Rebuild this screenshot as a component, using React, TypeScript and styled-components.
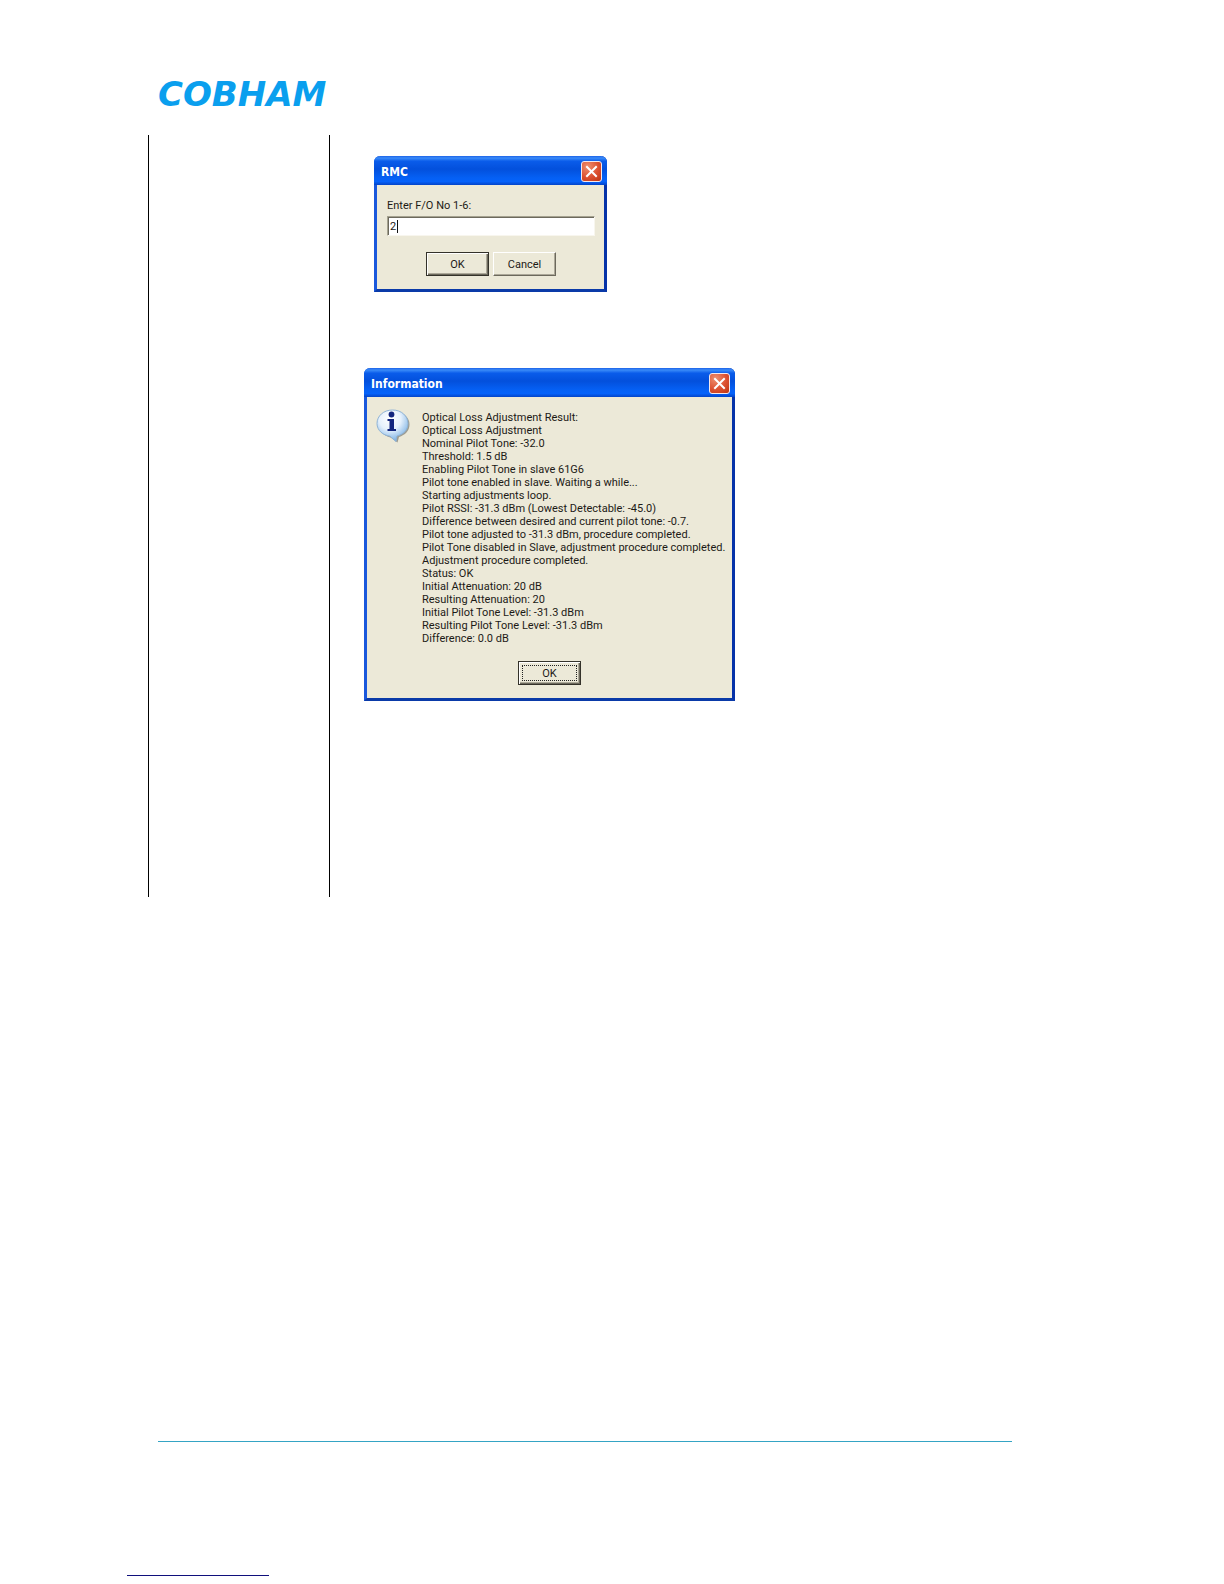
import React, { useState } from "react";
import styled, { createGlobalStyle, css } from "styled-components";

const GlobalStyle = createGlobalStyle`
  *, *::before, *::after { box-sizing: border-box; }
  body { margin: 0; background: #fff; }
`;

const uiFont = css`
  font-family: Roboto, Tahoma, sans-serif;
  font-size: 11px;
  line-height: 13px;
`;

const Page = styled.div`
  min-height: 100vh;
  display: flex;
  flex-direction: column;
  padding: 78px 212px 8px 127px;
  color: #1c1a16;
  ${uiFont}
`;

const Header = styled.header`
  padding-left: 31px;
  margin-bottom: 25px;
`;

const Logo = styled.div`
  font-family: "DejaVu Sans", sans-serif;
  font-weight: 700;
  font-style: italic;
  font-size: 34px;
  line-height: 32px;
  color: #0a9fee;
`;

const Columns = styled.main`
  display: grid;
  grid-template-columns: 181px minmax(0, 1fr);
  min-height: 762px;
  margin-left: 21px;
`;

const SideColumn = styled.aside`
  border-left: 1px solid #000;
`;

const Figures = styled.div`
  display: flex;
  flex-direction: column;
  align-items: flex-start;
  gap: 76px;
  padding: 21px 0 0 34px;
  border-left: 1px solid #000;
`;

const Dialog = styled.section<{ $width: number; $inset?: boolean }>`
  width: ${(p) => p.$width}px;
  margin-left: ${(p) => (p.$inset ? 10 : 0)}px;
  background: #ece9d8;
  border: solid;
  border-width: 0 3px 3px;
  border-color: #0a3cc8 #0632a8 #0a3aa8 #1a58dc;
  border-radius: 6px 6px 0 0;
`;

const TitleBar = styled.header`
  display: flex;
  align-items: center;
  justify-content: space-between;
  height: 29px;
  margin: 0 -3px;
  padding: 2px 5px 0 7px;
  border-radius: 6px 6px 0 0;
  background: linear-gradient(#1c62e8 0, #3a8bf8 7%, #0a5cea 18%, #0350dc 45%, #0560f4 75%, #0562fa 88%, #0344c8 100%);
`;

const Title = styled.h2`
  margin: 0;
  font-family: "DejaVu Sans Condensed", "DejaVu Sans", sans-serif;
  font-size: 12px;
  line-height: 16px;
  font-weight: 700;
  color: #fff;
`;

const CloseButton = styled.button`
  display: grid;
  place-items: center;
  width: 21px;
  height: 21px;
  padding: 0;
  border: 1px solid #f4e8ec;
  border-radius: 3px;
  background: radial-gradient(circle at 30% 25%, #ee9070, #dc5030 55%, #bc3412);
`;

const Form = styled.form`
  padding: 14px 9px 13px 10px;
`;

const Label = styled.label`
  display: block;
  margin-bottom: 4px;
`;

const Field = styled.input`
  display: block;
  width: 100%;
  height: 20px;
  padding: 0 2px;
  border: 1px solid;
  border-color: #a5a290 #f8f6ee #f8f6ee #a5a290;
  box-shadow: inset 1px 1px #6c695c;
  border-radius: 0;
  color: #1c1a16;
  ${uiFont}
  background: linear-gradient(#111, #111) 9px 3px / 1px 13px no-repeat #fff;
  outline: none;
`;

const Actions = styled.div`
  display: flex;
  justify-content: center;
  gap: 4px;
  margin-top: 16px;
`;

const Button = styled.button<{ $primary?: boolean }>`
  position: relative;
  width: 63px;
  height: 24px;
  padding: 0;
  ${uiFont}
  color: #1c1a16;
  background: #ece9d8;
  border: 1px solid;
  border-color: ${(p) => (p.$primary ? "#34322a" : "#fff #6c695c #6c695c #fff")};
  box-shadow: ${(p) =>
    p.$primary
      ? "inset 1px 1px #fff, inset -1px -1px #6c695c, inset -2px -2px #aca899"
      : "inset -1px -1px #aca899"};
`;

const FocusButton = styled(Button)`
  &::after {
    content: "";
    position: absolute;
    inset: 3px;
    border: 1px dotted #222;
  }
`;

const Message = styled.div`
  display: flex;
  gap: 12px;
  padding: 12px 0 0 9px;
`;

const Balloon = styled.svg`
  flex: none;
`;

const Report = styled.div`
  padding-top: 2px;
`;

const Line = styled.p`
  margin: 0;
  white-space: nowrap;
`;

const MessageActions = styled(Actions)`
  padding-bottom: 13px;
`;

const FooterRule = styled.hr`
  width: calc(100% - 31px);
  height: 1px;
  margin: auto 0 0 31px;
  border: 0;
  background: #35a4c4;
`;

const NoteRule = styled.hr`
  width: 142px;
  height: 1px;
  margin: 133px 0 0;
  border: 0;
  background: #10107c;
`;

const CloseIcon = () => (
  <svg width="13" height="13" viewBox="0 0 13 13" aria-hidden="true">
    <path d="M2 2l9 9M11 2l-9 9" stroke="#fff" strokeWidth="2" strokeLinecap="square" />
  </svg>
);

const InfoIcon = () => (
  <Balloon width="34" height="34" viewBox="0 0 34 34" aria-hidden="true">
    <defs>
      <radialGradient id="balloon" cx="42%" cy="28%" r="70%">
        <stop offset="0" stopColor="#fff" />
        <stop offset="0.5" stopColor="#e6f1fc" />
        <stop offset="1" stopColor="#7fb4e6" />
      </radialGradient>
    </defs>
    <path
      d="M18 3C27 3 33.500 8 33.500 15.500C33.500 22 29 26 23 28L21.500 33.500L14.500 28.500C8 27 3 22 3 16Z"
      fill="#7c7a72"
      opacity="0.7"
    />
    <path
      d="M16.500 1C25.500 1 32 7 32 14.500C32 21 27.500 25.500 21 27L20 32.500L14 27.200C7 26.300 1 21.500 1 14.500C1 7 7.500 1 16.500 1Z"
      fill="url(#balloon)"
      stroke="#8fb3d6"
      strokeWidth="1"
    />
    <circle cx="15.500" cy="5.500" r="2.900" fill="#12257e" />
    <path d="M11.500 10H18V20H20V22H11.500V20H13.500V12H11.500Z" fill="#12257e" />
  </Balloon>
);

const reportLines = [
  "Optical Loss Adjustment Result:",
  "Optical Loss Adjustment",
  "Nominal Pilot Tone: -32.0",
  "Threshold: 1.5 dB",
  "Enabling Pilot Tone in slave 61G6",
  "Pilot tone enabled in slave. Waiting a while...",
  "Starting adjustments loop.",
  "Pilot RSSI: -31.3 dBm (Lowest Detectable: -45.0)",
  "Difference between desired and current pilot tone: -0.7.",
  "Pilot tone adjusted to -31.3 dBm, procedure completed.",
  "Pilot Tone disabled in Slave, adjustment procedure completed.",
  "Adjustment procedure completed.",
  "Status: OK",
  "Initial Attenuation: 20 dB",
  "Resulting Attenuation: 20",
  "Initial Pilot Tone Level: -31.3 dBm",
  "Resulting Pilot Tone Level: -31.3 dBm",
  "Difference: 0.0 dB",
];

function DialogTitle({ children }: { children: string }) {
  return (
    <TitleBar>
      <Title>{children}</Title>
      <CloseButton type="button" aria-label="Close">
        <CloseIcon />
      </CloseButton>
    </TitleBar>
  );
}

export default function App() {
  const [option, setOption] = useState("2");

  return (
    <>
      <GlobalStyle />
      <Page>
        <Header>
          <Logo>COBHAM</Logo>
        </Header>
        <Columns>
          <SideColumn />
          <Figures>
            <Dialog $width={233} $inset>
              <DialogTitle>RMC</DialogTitle>
              <Form onSubmit={(e) => e.preventDefault()}>
                <Label htmlFor="fo-number">Enter F/O No 1-6:</Label>
                <Field id="fo-number" value={option} onChange={(e) => setOption(e.target.value)} />
                <Actions>
                  <Button $primary type="submit">OK</Button>
                  <Button type="button">Cancel</Button>
                </Actions>
              </Form>
            </Dialog>
            <Dialog $width={371}>
              <DialogTitle>Information</DialogTitle>
              <Message>
                <InfoIcon />
                <Report>
                  {reportLines.map((line) => (
                    <Line key={line}>{line}</Line>
                  ))}
                </Report>
              </Message>
              <MessageActions>
                <FocusButton $primary type="button">OK</FocusButton>
              </MessageActions>
            </Dialog>
          </Figures>
        </Columns>
        <FooterRule />
        <NoteRule />
      </Page>
    </>
  );
}
